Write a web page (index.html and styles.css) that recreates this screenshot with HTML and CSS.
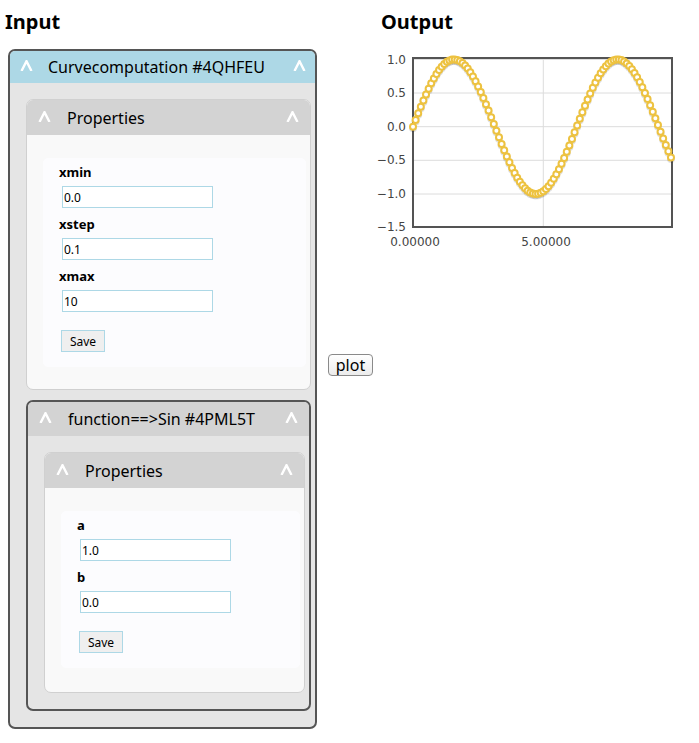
FILE: index.html
```html
<!DOCTYPE html>
<html>
<head>
<meta charset="utf-8">
<title>Curve</title>
<link rel="stylesheet" href="styles.css">
</head>
<body>
<div class="page">
  <div class="col-input">
    <h2 class="heading">Input</h2>
    <div class="panel panel-dark panel-outer">
      <div class="panel-head blue">
        <svg class="chev" viewBox="0 0 13 11"><polyline points="1.5,11 6.5,1.2 11.5,11"/></svg>
        <span class="panel-title">Curvecomputation #4QHFEU</span>
        <svg class="chev" viewBox="0 0 13 11"><polyline points="1.5,11 6.5,1.2 11.5,11"/></svg>
      </div>
      <div class="panel-body">
        <div class="panel panel-light">
          <div class="panel-head">
            <svg class="chev" viewBox="0 0 13 11"><polyline points="1.5,11 6.5,1.2 11.5,11"/></svg>
            <span class="panel-title">Properties</span>
            <svg class="chev" viewBox="0 0 13 11"><polyline points="1.5,11 6.5,1.2 11.5,11"/></svg>
          </div>
          <div class="props-body">
            <form class="form-box">
              <label class="field-label">xmin</label>
              <input class="field-input" type="text" value="0.0">
              <label class="field-label">xstep</label>
              <input class="field-input" type="text" value="0.1">
              <label class="field-label">xmax</label>
              <input class="field-input" type="text" value="10">
              <button class="save-btn" type="button">Save</button>
            </form>
          </div>
        </div>
        <div class="panel panel-dark panel-fn">
          <div class="panel-head dark-head">
            <svg class="chev" viewBox="0 0 13 11"><polyline points="1.5,11 6.5,1.2 11.5,11"/></svg>
            <span class="panel-title">function==&gt;Sin #4PML5T</span>
            <svg class="chev" viewBox="0 0 13 11"><polyline points="1.5,11 6.5,1.2 11.5,11"/></svg>
          </div>
          <div class="panel-body">
            <div class="panel panel-light">
              <div class="panel-head">
                <svg class="chev" viewBox="0 0 13 11"><polyline points="1.5,11 6.5,1.2 11.5,11"/></svg>
                <span class="panel-title">Properties</span>
                <svg class="chev" viewBox="0 0 13 11"><polyline points="1.5,11 6.5,1.2 11.5,11"/></svg>
              </div>
              <div class="props-body props-body-fn">
                <form class="form-box">
                  <label class="field-label">a</label>
                  <input class="field-input" type="text" value="1.0">
                  <label class="field-label">b</label>
                  <input class="field-input" type="text" value="0.0">
                  <button class="save-btn" type="button">Save</button>
                </form>
              </div>
            </div>
          </div>
        </div>
      </div>
    </div>
  </div>
  <div class="col-mid">
    <button class="plot-btn" type="button">plot</button>
  </div>
  <div class="col-output">
    <h2 class="heading heading-out">Output</h2>
    <div class="chart-wrap">
      <svg class="chart" width="310" height="200" viewBox="380 49 310 200">
        <g class="grid">
          <line x1="413" y1="59.4" x2="672" y2="59.4"/>
          <line x1="413" y1="93" x2="672" y2="93"/>
          <line x1="413" y1="126.7" x2="672" y2="126.7"/>
          <line x1="413" y1="160.3" x2="672" y2="160.3"/>
          <line x1="413" y1="194" x2="672" y2="194"/>
          <line x1="543.3" y1="58" x2="543.3" y2="227"/>
        </g>
        <rect class="frame" x="413" y="58" width="259" height="169"/>
        <g id="shadow" class="shadow"></g>
        <g id="points" class="points"></g>
      </svg>
      <span class="ylab" style="top:3.5px">1.0</span>
      <span class="ylab" style="top:37px">0.5</span>
      <span class="ylab" style="top:70.7px">0.0</span>
      <span class="ylab" style="top:104.3px">−0.5</span>
      <span class="ylab" style="top:138px">−1.0</span>
      <span class="ylab" style="top:170.5px">−1.5</span>
      <span class="xlab" style="left:8px">0.00000</span>
      <span class="xlab" style="left:139px">5.00000</span>
    </div>
  </div>
</div>
<script src="script.js"></script>
</body>
</html>
```

FILE: styles.css
```css
* { box-sizing: border-box; }
body {
  margin: 0;
  background: #fff;
  color: #000;
  font-family: "Noto Sans", "DejaVu Sans", sans-serif;
}
.page {
  display: flex;
  align-items: flex-start;
}
.col-input {
  width: 317px;
  flex: none;
  padding-left: 5px;
}
.heading {
  font-size: 20px;
  font-weight: bold;
  line-height: 24px;
  margin: 10px 0 15px;
}
.heading-out { padding-left: 1px; }
.panel {
  border-radius: 7px;
  overflow: hidden;
}
.panel-dark {
  border: 2px solid #555;
  background: #e5e5e5;
}
.panel-light {
  border: 1px solid #d0d0d0;
  background: #f9f9f9;
}
.panel-outer {
  margin-left: 3px;
  width: 309px;
}
.panel-fn { margin-top: 10px; }
.panel-head {
  display: flex;
  align-items: center;
  height: 35px;
  padding: 0 11px;
  gap: 16px;
  background: #d3d3d3;
  font-size: 16px;
}
.panel-head.blue {
  background: #add8e6;
  height: 32px;
  padding: 0 9px 0 10px;
  gap: 15px;
}
.panel-head.dark-head { height: 34px; }
.panel-title { flex: 1; white-space: nowrap; }
.chev {
  width: 13px;
  height: 11px;
  flex: none;
  margin-top: -3px;
}
.chev polyline {
  fill: none;
  stroke: #fff;
  stroke-width: 2.4;
}
.panel-body {
  padding: 16px 4px 16px 16px;
}
.props-body {
  padding: 23px 4px 22px 16px;
}
.props-body-fn { padding-bottom: 24px; }
.form-box {
  display: flex;
  flex-direction: column;
  align-items: flex-start;
  background: #fcfcfe;
  border-radius: 5px;
  padding: 6px 0 15px 16px;
  margin: 0;
}
.field-label {
  font-size: 13px;
  font-weight: bold;
  line-height: 16px;
  height: 16px;
}
.field-input {
  margin: 6px 0 8px 3px;
  width: 151px;
  height: 22px;
  border: 1px solid #add8e6;
  background: #fff;
  font-family: "Noto Sans", "DejaVu Sans", sans-serif;
  font-size: 12px;
  padding: 0 1px;
  color: #000;
  outline: none;
}
.save-btn {
  margin: 10px 0 0 2px;
  width: 44px;
  height: 22px;
  border: 1px solid #add8e6;
  background: #efefef;
  font-family: "Noto Sans", "DejaVu Sans", sans-serif;
  font-size: 12px;
  color: #000;
  padding: 0;
}
.col-mid {
  width: 63px;
  flex: none;
  align-self: center;
  padding-left: 11px;
}
.plot-btn {
  display: block;
  width: 45px;
  height: 22px;
  border: 1px solid #8a8a8a;
  border-radius: 4px;
  background: linear-gradient(#ffffff, #ececec);
  font-family: "Noto Sans", "DejaVu Sans", sans-serif;
  font-size: 16px;
  line-height: 18px;
  padding: 0;
  color: #000;
}
.col-output {
  flex: none;
  width: 319px;
}
.chart-wrap {
  position: relative;
  width: 310px;
  height: 200px;
}
.chart { display: block; }
.grid line {
  stroke: #dcdcdc;
  stroke-width: 1;
}
.frame {
  fill: none;
  stroke: #545454;
  stroke-width: 2;
}
.ylab, .xlab {
  position: absolute;
  font-family: "DejaVu Sans", sans-serif;
  font-size: 12px;
  line-height: 14px;
  height: 14px;
  color: #444;
  white-space: nowrap;
}
.ylab {
  right: 284px;
  text-align: right;
}
.xlab {
  top: 185.5px;
  width: 54px;
  text-align: center;
}
.shadow circle {
  fill: none;
  stroke: rgba(0, 0, 0, 0.12);
  stroke-width: 2;
}
.points circle {
  fill: #fff;
  stroke: #edc240;
  stroke-width: 2;
}
```

FILE: script.js
```js
(function () {
  var NS = 'http://www.w3.org/2000/svg';
  var pts = document.getElementById('points');
  var sh = document.getElementById('shadow');
  for (var i = 0; i < 100; i++) {
    var u = i * 0.1;
    var cx = 413 + u * 26.06;
    var cy = 126.7 - Math.sin(u) * 67.3;
    var s = document.createElementNS(NS, 'circle');
    s.setAttribute('cx', cx.toFixed(2));
    s.setAttribute('cy', (cy + 1.5).toFixed(2));
    s.setAttribute('r', '3');
    sh.appendChild(s);
    var c = document.createElementNS(NS, 'circle');
    c.setAttribute('cx', cx.toFixed(2));
    c.setAttribute('cy', cy.toFixed(2));
    c.setAttribute('r', '3');
    pts.appendChild(c);
  }
})();
```
